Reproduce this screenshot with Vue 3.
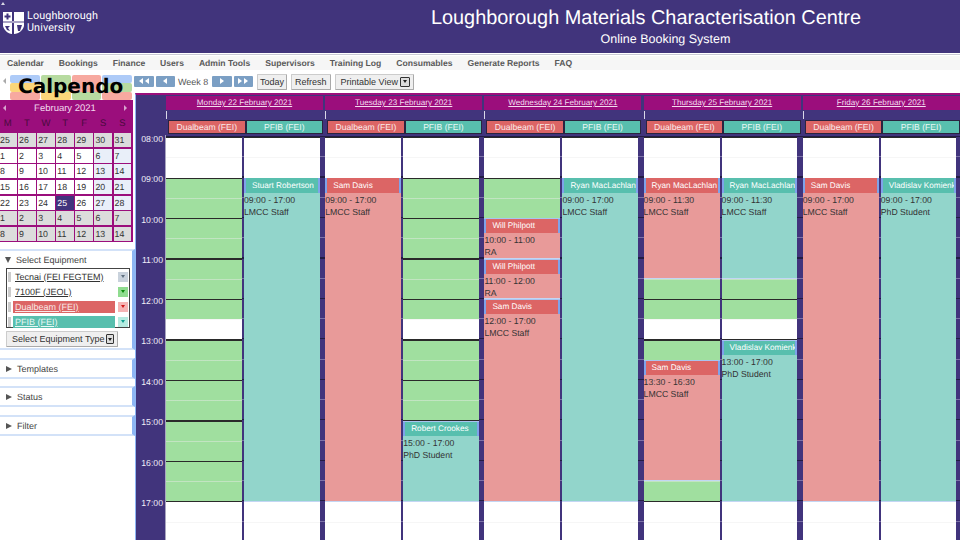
<template>
  <div class="page">
    <header class="top">
      <span class="collapse-mark"></span>
      <div class="uni">
        <svg class="shield" width="21" height="25" viewBox="0 0 21 25">
          <path fill="#fff" d="M0 1h9v9H0zM11 1h10v9H11zM0 12h9v11C5 23 1 19 0 15zM11 12h10v3c-1 4-5 8-10 8z" />
          <path fill="#41347c" d="M3.5 2.5h2v2h2v2h-2v2h-2v-2h-2v-2h2zM2 15l5 0-2 2 2 3-3-1zM14 14h5l-2 6h-2z" />
          <path fill="#fff" d="M0 10h21v2H0z" opacity=".55" />
        </svg>
        <div class="uni-name">Loughborough<br />University</div>
      </div>
      <div class="titles">
        <h1>Loughborough Materials Characterisation Centre</h1>
        <h2>Online Booking System</h2>
      </div>
    </header>

    <nav class="menu">
      <a v-for="item in menu" :key="item">{{ item }}</a>
    </nav>

    <div class="body">
      <aside class="side">
        <div class="brand-row">
          <span class="tri-left"></span>
          <div class="brand">
            <i class="b1"></i><i class="g2"></i><i class="s3"></i><i class="b4"></i>
            <i class="y1"></i><i class="g4"></i>
            <i class="s1"></i><i class="y2"></i><i class="g3"></i><i class="s4"></i>
            <span class="brand-name">Calpendo</span>
          </div>
        </div>

        <div class="mini">
          <div class="mini-head">
            <span class="tri-left dark"></span>
            <span>February 2021</span>
            <span class="tri-right dark"></span>
          </div>
          <div class="mini-dow">
            <span v-for="(d, i) in dows" :key="i">{{ d }}</span>
          </div>
          <div class="mini-days">
            <span
              v-for="(c, i) in miniCells"
              :key="i"
              class="cell"
              :class="{ other: c.other, weekend: c.weekend, today: c.today }"
            >{{ c.n }}</span>
          </div>
        </div>

        <section class="panel equipment">
          <div class="panel-title"><span class="tri-down"></span>Select Equipment</div>
          <ul class="equip-list">
            <li v-for="e in equipment" :key="e.name">
              <span class="handle"></span>
              <span class="equip-name" :class="e.cls">{{ e.name }}</span>
              <span class="swatch" :class="e.swatch"><b></b></span>
            </li>
          </ul>
          <button class="btn type-btn">Select Equipment Type <span class="drop"></span></button>
        </section>
        <section v-for="p in panels" :key="p" class="panel closed">
          <div class="panel-title"><span class="tri-closed"></span>{{ p }}</div>
        </section>
      </aside>

      <main class="main">
        <div class="toolbar">
          <button class="nav-btn first"><span class="tl"></span><span class="tl"></span></button>
          <button class="nav-btn"><span class="tl"></span></button>
          <span class="week">Week 8</span>
          <button class="nav-btn"><span class="tr"></span></button>
          <button class="nav-btn"><span class="tr"></span><span class="tr"></span></button>
          <button class="btn today">Today</button>
          <button class="btn">Refresh</button>
          <button class="btn print">Printable View <span class="drop"></span></button>
        </div>

        <div class="cal">
          <div class="cal-head">
            <div v-for="d in days" :key="d.label" class="day-head">
              <div class="day-name"><span>{{ d.label }}</span></div>
              <div class="day-tick"></div>
              <div class="equip-heads">
                <span class="eh red">Dualbeam (FEI)</span>
                <span class="eh teal">PFIB (FEI)</span>
              </div>
            </div>
          </div>
          <div class="grid">
            <div class="gutter">
              <div v-for="h in hours" :key="h" class="hour">{{ h }}</div>
            </div>
            <div class="days">
              <div v-for="d in days" :key="d.label" class="day">
                <div v-for="(col, ci) in d.cols" :key="ci" class="col">
                  <div v-for="(a, ai) in avail" :key="ai" class="avail" :style="place(a[0], a[1])"></div>
                  <div
                    v-for="ev in col"
                    :key="ev.from"
                    class="event"
                    :class="[ci === 0 ? 'ev-red' : 'ev-teal', { 'day-start': ev.from === 9 }]"
                    :style="place(ev.from, ev.to)"
                  >
                    <div class="ev-name">{{ ev.who }}</div>
                    <div class="ev-text">{{ fmt(ev.from) }} - {{ fmt(ev.to) }}</div>
                    <div class="ev-text">{{ ev.role }}</div>
                  </div>
                </div>
              </div>
            </div>
          </div>
        </div>
      </main>
    </div>
  </div>
</template>

<script setup>
const menu = ['Calendar', 'Bookings', 'Finance', 'Users', 'Admin Tools', 'Supervisors', 'Training Log', 'Consumables', 'Generate Reports', 'FAQ']
const dows = ['M', 'T', 'W', 'T', 'F', 'S', 'S']
const panels = ['Templates', 'Status', 'Filter']

// mini calendar, 7 weeks starting from Mon 25 Jan
const nums = [25, 26, 27, 28, 29, 30, 31, 1, 2, 3, 4, 5, 6, 7, 8, 9, 10, 11, 12, 13, 14, 15, 16, 17, 18, 19, 20, 21, 22, 23, 24, 25, 26, 27, 28, 1, 2, 3, 4, 5, 6, 7, 8, 9, 10, 11, 12, 13, 14]
const miniCells = nums.map((n, i) => ({
  n,
  other: i < 7 || i >= 35,
  weekend: i % 7 >= 5,
  today: i === 31
}))

const equipment = [
  { name: 'Tecnai (FEI FEGTEM)', cls: 'plain', swatch: 'sw-grey' },
  { name: '7100F (JEOL)', cls: 'plain', swatch: 'sw-green' },
  { name: 'Dualbeam (FEI)', cls: 'on-red', swatch: 'sw-red' },
  { name: 'PFIB (FEI)', cls: 'on-teal', swatch: 'sw-teal' }
]

const hours = ['08:00', '09:00', '10:00', '11:00', '12:00', '13:00', '14:00', '15:00', '16:00', '17:00']
const avail = [[9, 12.5], [13, 17]]
const HOUR = 40.5

const days = [
  {
    label: 'Monday 22 February 2021',
    cols: [[], [{ from: 9, to: 17, who: 'Stuart Robertson', role: 'LMCC Staff' }]]
  },
  {
    label: 'Tuesday 23 February 2021',
    cols: [
      [{ from: 9, to: 17, who: 'Sam Davis', role: 'LMCC Staff' }],
      [{ from: 15, to: 17, who: 'Robert Crookes', role: 'PhD Student' }]
    ]
  },
  {
    label: 'Wednesday 24 February 2021',
    cols: [
      [
        { from: 10, to: 11, who: 'Will Philpott', role: 'RA' },
        { from: 11, to: 12, who: 'Will Philpott', role: 'RA' },
        { from: 12, to: 17, who: 'Sam Davis', role: 'LMCC Staff' }
      ],
      [{ from: 9, to: 17, who: 'Ryan MacLachlan', role: 'LMCC Staff' }]
    ]
  },
  {
    label: 'Thursday 25 February 2021',
    cols: [
      [
        { from: 9, to: 11.5, who: 'Ryan MacLachlan', role: 'LMCC Staff' },
        { from: 13.5, to: 16.5, who: 'Sam Davis', role: 'LMCC Staff' }
      ],
      [
        { from: 9, to: 11.5, who: 'Ryan MacLachlan', role: 'LMCC Staff' },
        { from: 13, to: 17, who: 'Vladislav Komienko', role: 'PhD Student' }
      ]
    ]
  },
  {
    label: 'Friday 26 February 2021',
    cols: [
      [{ from: 9, to: 17, who: 'Sam Davis', role: 'LMCC Staff' }],
      [{ from: 9, to: 17, who: 'Vladislav Komienko', role: 'PhD Student' }]
    ]
  }
]

const place = (from, to) => ({
  top: (from - 8) * HOUR + 'px',
  height: (to - from) * HOUR + 'px'
})

const fmt = (t) => {
  const h = Math.floor(t)
  return String(h).padStart(2, '0') + ':' + (t > h ? '30' : '00')
}
</script>

<style scoped>
.page {
  width: 960px;
  height: 540px;
  overflow: hidden;
  display: flex;
  flex-direction: column;
  font-family: "Liberation Sans", Arial, sans-serif;
  text-rendering: geometricPrecision;
  background: #fff;
  color: #333;
}

/* header */
.top {
  flex: none;
  height: 53px;
  background: #41347c;
  display: flex;
  position: relative;
  border-bottom: 1px solid #fff;
  box-shadow: 0 1px 0 #c9c9d4;
}
.collapse-mark {
  position: absolute;
  left: 1px;
  top: 2px;
  border-left: 2px solid transparent;
  border-right: 2px solid transparent;
  border-bottom: 3px solid #d8d8e4;
}
.uni {
  width: 425px;
  padding: 10px 0 0 3px;
  display: flex;
  gap: 3px;
  box-sizing: border-box;
}
.shield {
  margin-top: 1px;
}
.uni-name {
  font-family: Roboto, sans-serif;
  color: #fff;
  font-size: 10.8px;
  line-height: 11.5px;
  letter-spacing: 0.1px;
}
.titles {
  width: 442px;
  text-align: center;
  color: #fff;
}
.titles h1 {
  margin: 7px 0 0;
  font-size: 19.9px;
  line-height: 23px;
  font-weight: normal;
}
.titles h2 {
  margin: 2px 0 0;
  padding-left: 39px;
  font-size: 12.5px;
  line-height: 15px;
  font-weight: normal;
}

/* menu */
.menu {
  flex: none;
  margin-top: 2px;
  height: 14px;
  background: #f6f6f6;
  display: flex;
  gap: 14.9px;
  padding-left: 7px;
  font-size: 8.6px;
  line-height: 14px;
  font-weight: bold;
  color: #5a5a5a;
}

.body {
  flex: 1;
  display: flex;
  min-height: 0;
}

/* sidebar */
.side {
  flex: none;
  width: 135px;
  font-size: 9px;
}
.brand-row {
  height: 30px;
  display: flex;
  align-items: flex-start;
  padding-top: 5px;
  box-sizing: border-box;
}
.tri-left {
  display: inline-block;
  margin: 3px 4px 0 3px;
  border-top: 3px solid transparent;
  border-bottom: 3px solid transparent;
  border-right: 3px solid #aaa;
}
.tri-right {
  display: inline-block;
  border-top: 3px solid transparent;
  border-bottom: 3px solid transparent;
  border-left: 3px solid #aaa;
}
.brand {
  width: 122px;
  height: 25px;
  display: grid;
  grid-template-columns: repeat(4, 1fr);
  grid-template-rows: repeat(3, 1fr);
  gap: 0 1px;
  position: relative;
}
.brand i {
  display: block;
  border-radius: 2px;
}
.b1 { grid-area: 1 / 1; background: #aecbf8; }
.g2 { grid-area: 1 / 2 / 3 / 3; background: #b7dba0; }
.s3 { grid-area: 1 / 3 / 3 / 4; background: #f7a9a0; }
.b4 { grid-area: 1 / 4; background: #aecbf8; }
.y1 { grid-area: 2 / 1; background: #fbd67a; }
.g4 { grid-area: 2 / 4; background: #b7dba0; }
.s1 { grid-area: 3 / 1; background: #f7a9a0; }
.y2 { grid-area: 3 / 2; background: #fbd67a; }
.g3 { grid-area: 3 / 3; background: #b7dba0; }
.s4 { grid-area: 3 / 4; background: #f7a9a0; }
.brand-name {
  position: absolute;
  left: 8px;
  top: 0;
  font-family: "DejaVu Sans", sans-serif;
  font-weight: bold;
  font-size: 20px;
  line-height: 23px;
  color: #000;
}

.mini {
  width: 133px;
  height: 142px;
  background: #9b0e7c;
  overflow: hidden;
}
.mini-head {
  height: 16px;
  display: flex;
  justify-content: space-between;
  align-items: center;
  padding: 0 6px 0 3px;
  color: #f3d9ee;
  font-size: 9.5px;
}
.mini-head .tri-left {
  margin: 0;
}
.tri-left.dark {
  border-right-color: #d9a5cf;
}
.tri-right.dark {
  border-left-color: #d9a5cf;
}
.mini-dow {
  display: grid;
  grid-template-columns: repeat(7, 17.6px);
  column-gap: 1.5px;
  margin-left: -1px;
  height: 17px;
  line-height: 16px;
  text-align: center;
  color: #4a0a3c;
  font-size: 9.5px;
}
.mini-days {
  display: grid;
  grid-template-columns: repeat(7, 17.6px);
  grid-auto-rows: 14px;
  gap: 1.7px 1.5px;
  margin-left: -1px;
}
.cell {
  background: #fff;
  line-height: 14px;
  padding-left: 1px;
  color: #333;
  font-size: 8.8px;
}
.cell.weekend {
  background: #e9eff9;
}
.cell.other {
  background: #dcdcdc;
}
.cell.today {
  background: #41347c;
  color: #fff;
}

.panel {
  background: #fff;
  border-top: 2px solid #d3e2f8;
  border-bottom: 2px solid #d3e2f8;
  border-right: 3px solid #8db6f4;
  box-sizing: border-box;
  margin-bottom: 7.5px;
}
.equipment {
  margin-top: 7px;
  height: 101px;
}
.closed {
  height: 21px;
}
.closed .panel-title {
  height: 18px;
}
.panel-title {
  display: flex;
  align-items: center;
  height: 17px;
  padding-left: 5px;
  gap: 5px;
  color: #444;
}
.tri-down {
  border-left: 3.5px solid transparent;
  border-right: 3.5px solid transparent;
  border-top: 6px solid #555;
}
.tri-closed {
  margin-left: 1px;
  border-top: 3.5px solid transparent;
  border-bottom: 3.5px solid transparent;
  border-left: 6px solid #555;
}
.equip-list {
  list-style: none;
  margin: 0 0 3px 6px;
  padding: 0;
  width: 124px;
  height: 60px;
  box-sizing: border-box;
  border: 1px solid #444;
}
.equip-list li {
  height: 15px;
  display: flex;
  align-items: center;
  gap: 2px;
  padding-left: 1px;
}
.handle {
  width: 3px;
  height: 10px;
  background: #ccc;
}
.equip-name {
  width: 102px;
  height: 12px;
  line-height: 12px;
  padding-left: 2px;
  box-sizing: border-box;
  white-space: nowrap;
  text-decoration: underline;
}
.on-red {
  background: #dc6565;
  color: #f8e8e8;
}
.on-teal {
  background: #58bfae;
  color: #e8f8f5;
}
.swatch {
  margin-left: 1px;
  width: 10px;
  height: 10px;
  display: flex;
  align-items: center;
  justify-content: center;
}
.swatch b {
  border-left: 2.5px solid transparent;
  border-right: 2.5px solid transparent;
  border-top: 3px solid #555;
}
.sw-grey { background: #c9d2dc; }
.sw-grey b { border-top-color: #607080; }
.sw-green { background: #8fdc8f; }
.sw-green b { border-top-color: #0a8a0a; }
.sw-red { background: #f5b5b5; }
.sw-red b { border-top-color: #d01818; }
.sw-teal { background: #b5ebe0; }
.sw-teal b { border-top-color: #10a090; }

.btn {
  font: inherit;
  font-size: 9px;
  height: 16px;
  padding: 0 3px;
  display: inline-flex;
  align-items: center;
  gap: 2px;
  color: #333;
  background: #efefef;
  border: 1px solid #ccc;
  border-bottom-color: #aaa;
  border-right-color: #aaa;
  border-radius: 1px;
  box-sizing: border-box;
}
.type-btn {
  margin-left: 6px;
  width: 112px;
  padding-left: 5px;
  white-space: nowrap;
}
.drop {
  width: 10px;
  height: 10px;
  box-sizing: border-box;
  border: 1px solid #333;
  background: #ddd;
  border-radius: 1px;
  display: inline-flex;
  align-items: center;
  justify-content: center;
}
.drop::after {
  content: "";
  border-left: 2.5px solid transparent;
  border-right: 2.5px solid transparent;
  border-top: 3px solid #222;
}

/* toolbar */
.main {
  flex: 1;
  min-width: 0;
  display: flex;
  flex-direction: column;
}
.toolbar {
  flex: none;
  height: 23px;
  display: flex;
  align-items: center;
  font-size: 9px;
  box-sizing: border-box;
}
.toolbar .btn {
  margin-left: 4px;
  white-space: nowrap;
}
.toolbar .today {
  margin-left: 2px;
  padding: 0 2px;
}
.toolbar .print {
  padding: 0 3px 0 5px;
}
.nav-btn {
  width: 19.5px;
  height: 11px;
  padding: 0;
  margin: -1px 2px 0 0;
  border: 0;
  background: #7b9fc4;
  border-radius: 1px;
  display: flex;
  align-items: center;
  justify-content: center;
  gap: 2px;
}
.nav-btn.first {
  margin-left: -1px;
}
.tl {
  border-top: 3.5px solid transparent;
  border-bottom: 3.5px solid transparent;
  border-right: 4px solid #fff;
}
.tr {
  border-top: 3.5px solid transparent;
  border-bottom: 3.5px solid transparent;
  border-left: 4px solid #fff;
}
.week {
  width: 34px;
  padding-left: 1px;
  box-sizing: border-box;
  color: #555;
  margin-right: 1px;
}

/* calendar */
.cal {
  flex: 1;
  min-height: 0;
  background: #41347c;
  border-top: 2px solid #9b0e7c;
  border-left: 1px solid #8db6f4;
  display: flex;
  flex-direction: column;
  overflow: hidden;
}
.cal-head {
  flex: none;
  height: 40px;
  display: flex;
  gap: 2.2px;
  padding: 1px 0 0 30px;
  box-sizing: border-box;
}
.day-head {
  flex: none;
  width: 157px;
}
.day-name {
  height: 14px;
  line-height: 14px;
  background: #9b0e7c;
  color: #f3dcef;
  text-align: center;
  font-size: 8.15px;
  text-decoration: underline;
}
.day-tick {
  height: 8px;
  margin: 1px 0;
  border-left: 1px solid #d8d8e8;
  box-sizing: border-box;
}
.equip-heads {
  display: flex;
  margin-left: 2px;
  height: 14px;
  width: 155px;
}
.eh {
  flex: 1;
  text-align: center;
  font-size: 8.6px;
  line-height: 13px;
  color: #fbeaea;
  border: 1px solid #2a2440;
  box-sizing: border-box;
}
.eh.red {
  background: #dc6565;
}
.eh.teal {
  background: #58bfae;
  color: #e8f8f5;
}

.grid {
  flex: 1;
  min-height: 0;
  display: flex;
  overflow: hidden;
}
.gutter {
  flex: none;
  width: 29px;
  margin-top: -1.5px;
  text-align: right;
  color: #f0eef8;
  font-size: 8.7px;
}
.hour {
  height: 40.5px;
  line-height: 11px;
  padding-right: 2px;
  box-sizing: border-box;
}
.days {
  flex: 1;
  display: flex;
  gap: 5.7px;
  padding-top: 2px;
  background-color: #41347c;
  border-left: 1.5px solid #a9a6c0;
  background-image:
    repeating-linear-gradient(to bottom, #221c44 0 1px, transparent 1px 20.25px, #7c72a8 20.25px 21.25px, transparent 21.25px 40.5px);
  background-position: 0 1px;
}
.day {
  flex: none;
  display: flex;
  gap: 2px;
}
.col {
  position: relative;
  width: 76px;
  height: 420px;
  background: #fff;
}
.col + .col {
  width: 75.5px;
}
/* hour and half hour rules run over the free/white slots, bookings sit on top */
.col::after {
  content: "";
  position: absolute;
  inset: 0;
  background-image:
    repeating-linear-gradient(to bottom, #2a2a2a 0 1px, transparent 1px 20.25px, rgba(235, 235, 235, 0.45) 20.25px 21.25px, transparent 21.25px 40.5px);
}
.avail {
  position: absolute;
  left: 0;
  right: 0;
  background: #a0df9f;
}
.event {
  position: absolute;
  left: 0;
  right: 0;
  z-index: 1;
  overflow: hidden;
  border-top: 1px solid #a9c4f0;
  border-bottom: 1px solid #c3d6f4;
  box-sizing: border-box;
  color: #333;
  font-size: 8.7px;
}
.event.day-start {
  border-top: 0;
  padding-top: 1px;
}
.ev-red {
  background: #e89a99;
}
.ev-teal {
  background: #92d5cb;
}
.ev-name {
  height: 14px;
  line-height: 14px;
  padding-left: 6px;
  white-space: nowrap;
  overflow: hidden;
  color: #fff;
  font-size: 8.2px;
  border-left: 2px solid #7fa3ea;
  border-right: 2px solid #7fa3ea;
}
.day-start .ev-name {
  margin-top: -1px;
  height: 15px;
  line-height: 16px;
}
.ev-red .ev-name {
  background: #dc6565;
}
.ev-teal .ev-name {
  background: #58bfae;
}
.ev-text {
  line-height: 12px;
  white-space: nowrap;
}
.ev-name + .ev-text {
  margin-top: 1px;
}
</style>
